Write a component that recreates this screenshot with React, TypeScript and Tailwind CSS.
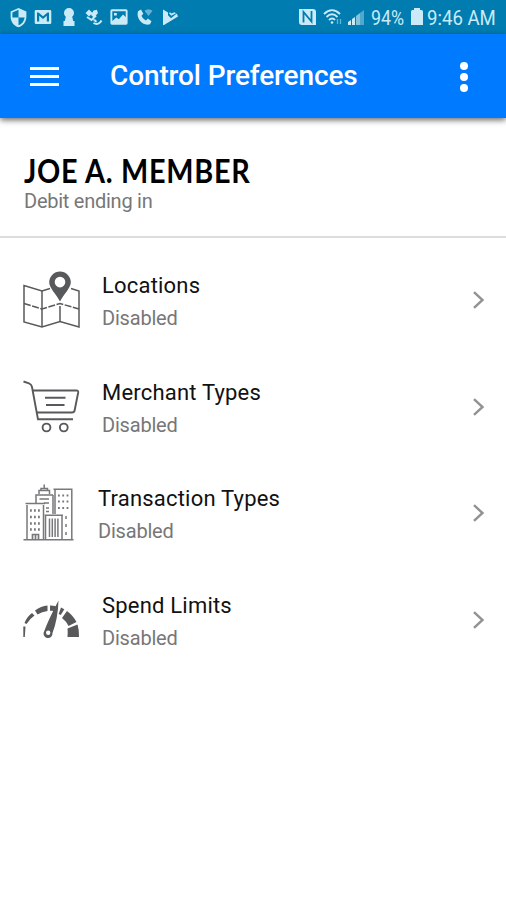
import type { ReactNode } from "react";
import { MdSecurity } from "react-icons/md";

const StatusGlyph = ({ children }: { children: ReactNode }) => (
  <svg viewBox="0 0 20 20" className="mx-[2.65px] h-5 w-5 shrink-0" fill="currentColor">
    {children}
  </svg>
);

const StatusBar = () => (
  <div className="flex h-[34px] items-center justify-between bg-[#007cb1] pl-[5.5px] pr-[10px] text-[#c9eaf6]">
    <div className="flex items-center">
      <MdSecurity className="mx-[2.15px] h-[21px] w-[21px] shrink-0" />
      <StatusGlyph>
        <path
          fillRule="evenodd"
          d="M3 3h14a1.3 1.3 0 0 1 1.3 1.3v11.4A1.3 1.3 0 0 1 17 17H3a1.3 1.3 0 0 1-1.3-1.3V4.300A1.300 1.300 0 0 1 3 3ZM4 5.500V14.600H6.200V8.800L10 12L13.800 8.800V14.600H16V5.500H14.500L10 9.300L5.500 5.500Z"
        />
      </StatusGlyph>
      <StatusGlyph>
        <path d="M10 1a5 5 0 0 1 5 5c0 1.800-.9 3-1.800 3.800l1 4.200h1.300v5H4.500v-5h1.300l1-4.200C5.900 9 5 7.800 5 6a5 5 0 0 1 5-5Z" />
      </StatusGlyph>
      <StatusGlyph>
        <path d="M5 2.500 8.500 6 5 9.500 1.500 6Z M9.500 3.500 12.800 2.700 14 6 10 10.800 7 8Z" />
        <path
          d="M3 10 7.500 13 12 8.500M9.500 13.500c1.500-.5 2.500.2 2.300 1.700M9.500 16c3.500 2 6.500.5 8-2.500"
          fill="none"
          stroke="currentColor"
          strokeWidth="2"
        />
      </StatusGlyph>
      <StatusGlyph>
        <path
          fillRule="evenodd"
          d="M3 2.300h14A1.600 1.600 0 0 1 18.600 4v12A1.600 1.600 0 0 1 17 17.700H3A1.600 1.600 0 0 1 1.400 16V4A1.600 1.600 0 0 1 3 2.300ZM3.300 4.300V14L7.300 10.500 9.800 12.200 14 7.500 16.700 10V4.300ZM5 6h2.800v2.500H5Z"
        />
      </StatusGlyph>
      <StatusGlyph>
        <path d="M3 4.300 6 2.500 8.300 6.800 6.500 8.700c.9 2 2.400 3.600 4.500 4.700l1.900-1.800 3.600 2.700-1.500 3C7.500 19.500.8 11.500 3 4.300Z" />
        <path d="M9.500 3.700c2.500-2 5.500-2 8 0L13.500 9Z" opacity=".5" />
      </StatusGlyph>
      <StatusGlyph>
        <path d="M3 2.500 8 5.500v2.800l3 3 5.800-4.800L18 9.500 4 18H3Z" />
        <path d="m9 6.300 2.300 2.500L16 6.200l-1.500-1-3 1.300-1.500-1.200Z" />
      </StatusGlyph>
    </div>

    <div className="flex items-center">
      <svg viewBox="0 0 19 20" className="h-5 w-[19px]">
        <path fill="currentColor" d="M1 2h14a3 3 0 0 1 3 3v13H4a3 3 0 0 1-3-3Z" />
        <path d="M5.500 15.500V5l8 9.500V4" fill="none" stroke="#007cb1" strokeWidth="1.800" />
      </svg>
      <svg viewBox="0 0 20 20" className="ml-[6px] h-5 w-5" fill="none" stroke="currentColor">
        <path d="M1 7C6 2 12 2 17 7M3.500 10C7 6.500 11 6.500 14.500 10M6 13c2-2 4.500-2 6 0" strokeWidth="1.800" />
        <circle cx="9" cy="15.500" r="1.300" fill="currentColor" stroke="none" />
        <path d="M14.500 12v5M17.500 12v5" strokeWidth="1.300" opacity=".5" />
      </svg>
      <svg viewBox="0 0 18 18" className="ml-[4px] h-[18px] w-[18px]" fill="currentColor">
        <path d="M1 17v-3l3-2v5ZM5 17v-6l3-2v8Z" />
        <path d="M9 17V8l4-3v12Z" opacity=".65" />
        <path d="M13 17V5l4-3v15Z" opacity=".4" />
      </svg>
      <span className="ml-[6px] w-[34px] whitespace-nowrap pt-[5px]">
        <span className="inline-block origin-left scale-x-[0.89] text-[20px] leading-5">94%</span>
      </span>
      <svg viewBox="0 0 14 20" className="ml-[5px] h-5 w-[14px]" fill="currentColor">
        <path d="M4 1h6v2h1.500A1.500 1.500 0 0 1 13 4.500V18H1V4.500A1.500 1.500 0 0 1 2.500 3H4Z" />
      </svg>
      <span className="ml-[3px] w-[69px] whitespace-nowrap pt-[5px]">
        <span className="inline-block origin-left scale-x-[0.93] text-[20px] leading-5">9:46 AM</span>
      </span>
    </div>
  </div>
);

const Header = () => (
  <header className="relative flex h-[84px] items-center bg-[#007aff] pl-[30px] pr-[38px] text-white shadow-[0_2px_6px_rgba(0,0,0,0.6)]">
    <button className="flex w-[29px] flex-col gap-[5px] pt-px" aria-label="Menu">
      <span className="h-[3px] w-full bg-white" />
      <span className="h-[3px] w-full bg-white" />
      <span className="h-[3px] w-full bg-white" />
    </button>
    <h1 className="ml-[51px] whitespace-nowrap text-[28px] font-medium leading-8 tracking-[-0.12px]">
      Control Preferences
    </h1>
    <button className="ml-auto flex flex-col gap-[3px] pt-px" aria-label="More">
      <span className="h-2 w-2 rounded-full bg-white" />
      <span className="h-2 w-2 rounded-full bg-white" />
      <span className="h-2 w-2 rounded-full bg-white" />
    </button>
  </header>
);

const MapIcon = () => (
  <svg viewBox="12 10 60 60" className="h-[60px] w-[60px]" fill="none" stroke="#58595b" strokeWidth="1.500">
    <path d="M40 28.500 32 31 14 25.500V62L32 67 50 61.500 69 67V31L61 28.500" />
    <path d="M32 31V67M50 46V61" />
    <path d="M14 43.500 32 49 50 43.500 69 49" strokeDasharray="7 1.500" />
    <path
      fill="#58595b"
      stroke="none"
      fillRule="evenodd"
      d="M50 11.500A10.800 10.800 0 0 1 60.800 22.300C60.800 28 54 34 50 41.500 46 34 39.200 28 39.200 22.300A10.800 10.800 0 0 1 50 11.500ZM50 16.800A5.300 5.300 0 1 0 50 27.400 5.300 5.300 0 1 0 50 16.800Z"
    />
  </svg>
);

const CartIcon = () => (
  <svg viewBox="12 6.5 60 60" className="h-[60px] w-[60px]" fill="none" stroke="#58595b" strokeWidth="1.900">
    <path d="M13.500 11 19 12.800Q21.500 13.700 22 16.500L28 48.800H63" />
    <path d="M22.800 20H66.500Q68.500 20 68.200 22L64.600 40Q64.200 42 62 42H26.700" />
    <path d="M35 27.300H55.500M36 34.500H54.500" />
    <circle cx="36.500" cy="57" r="3.900" />
    <circle cx="53.800" cy="57" r="3.900" />
  </svg>
);

const BuildingsIcon = () => (
  <svg viewBox="12 8 60 60" className="h-[60px] w-[60px]" fill="none" stroke="#77787a" strokeWidth="1.500">
    <path d="M13.500 64.700H63.500" strokeWidth="1.600" />
    <path d="M17 64V30M33.500 64V30M15.500 28.500H35" />
    <path d="M26 28V20H43M29 19V15.500H39.500V19M31 15V13.500H37.500V15M34.200 13V9.500M43 20V39" />
    <path d="M45 39V15M61.800 64V15M43.500 14.200H62.500" />
    <path d="M35.500 64V41M52 64V41M34.500 40.200H53" />
    <path d="M39.500 43.500V62M42.300 43.500V62M45.100 43.500V62M47.900 43.500V62" strokeWidth="1.500" />
    <path d="M29.500 24H39M34 28H39M36 33H39M36 36.500H39" />
    <path
      d="M20 35.500H31M20 42H31M20 48.500H31M20 54.500H31"
      strokeWidth="2.600"
      strokeDasharray="1.800 2.200"
    />
    <path d="M48 20.500H59M48 26.500H59M48 33H59" strokeWidth="2.200" strokeDasharray="1.800 2.500" />
    <path d="M56 41v3M56 49v3M56 57v3" strokeWidth="1.500" />
    <path d="M22.500 64V59.500H28.500V64M25.500 60V64" strokeWidth="1.700" />
  </svg>
);

const GaugeIcon = () => (
  <svg viewBox="12 -0.5 60 60" className="h-[60px] w-[60px]" fill="#58595b">
    <path d="M13.300 36H15.500L14.800 46.500H13.300Z" />
    <path d="M14.500 32.500Q17 26 22 22.500L24.500 25Q19.500 28.500 16.500 33.500Z" />
    <path d="M25 20Q31 15.500 37.500 15V20.500Q32 21 27.500 24Z" />
    <path d="M40 15Q43.500 15 46 15.700L44.300 20.500Q42 20.200 40 20.300Z" />
    <path d="M51 17 54.300 18.800 50.800 24.500 48.700 23.400Z" />
    <path d="M57 20.500Q63.500 25.500 66.500 31.500L58.500 35.500Q56 30.500 52 27.500Z" />
    <path d="M67.500 34Q69.300 39.500 69 46.500H57.500Q58 41.500 57.500 38Z" />
    <path
      fillRule="evenodd"
      d="M48.500 10Q48 28 42.500 42.500A4.500 4.500 0 1 1 34.300 40.500Q38.500 29 48.500 10ZM38.200 40A2.200 2.200 0 1 0 38.200 44.400 2.200 2.200 0 1 0 38.200 40Z"
    />
  </svg>
);

const controls = [
  { title: "Locations", status: "Disabled", icon: <MapIcon />, text: "ml-5" },
  { title: "Merchant Types", status: "Disabled", icon: <CartIcon />, text: "ml-5" },
  { title: "Transaction Types", status: "Disabled", icon: <BuildingsIcon />, text: "ml-4" },
  { title: "Spend Limits", status: "Disabled", icon: <GaugeIcon />, text: "ml-5" },
];

export default function App() {
  return (
    <div className="h-[900px] w-[506px] overflow-hidden bg-white font-['Roboto',sans-serif]">
      <StatusBar />
      <Header />

      <section className="h-[120px] border-b-2 border-[#dcdcdc] pl-6 pt-[37px]">
        <h2 className="origin-left scale-x-[0.9] whitespace-nowrap font-['Lato',sans-serif] text-[32px] font-bold leading-[32px] tracking-[0.8px] text-black">
          JOE A. MEMBER
        </h2>
        <p className="pt-[2px] text-[20px] leading-6 tracking-[-0.25px] text-[#777]">Debit ending in</p>
      </section>

      <ul className="pt-[9px]">
        {controls.map(({ title, status, icon, text }) => (
          <li key={title} className="flex h-[106.5px] items-center pl-[22px] pr-[20px]">
            {icon}
            <div className={`pt-[4px] ${text}`}>
              <p className="text-[22px] leading-[33px] tracking-[0.2px] text-[#111]">{title}</p>
              <p className="text-[20px] leading-[33px] tracking-[-0.2px] text-[#777]">{status}</p>
            </div>
            <svg viewBox="0 0 14 20" className="ml-auto h-5 w-[14px]" fill="none" stroke="#929292" strokeWidth="2.400">
              <path d="m2 2.200 8.500 7.800L2 17.800" />
            </svg>
          </li>
        ))}
      </ul>
    </div>
  );
}
